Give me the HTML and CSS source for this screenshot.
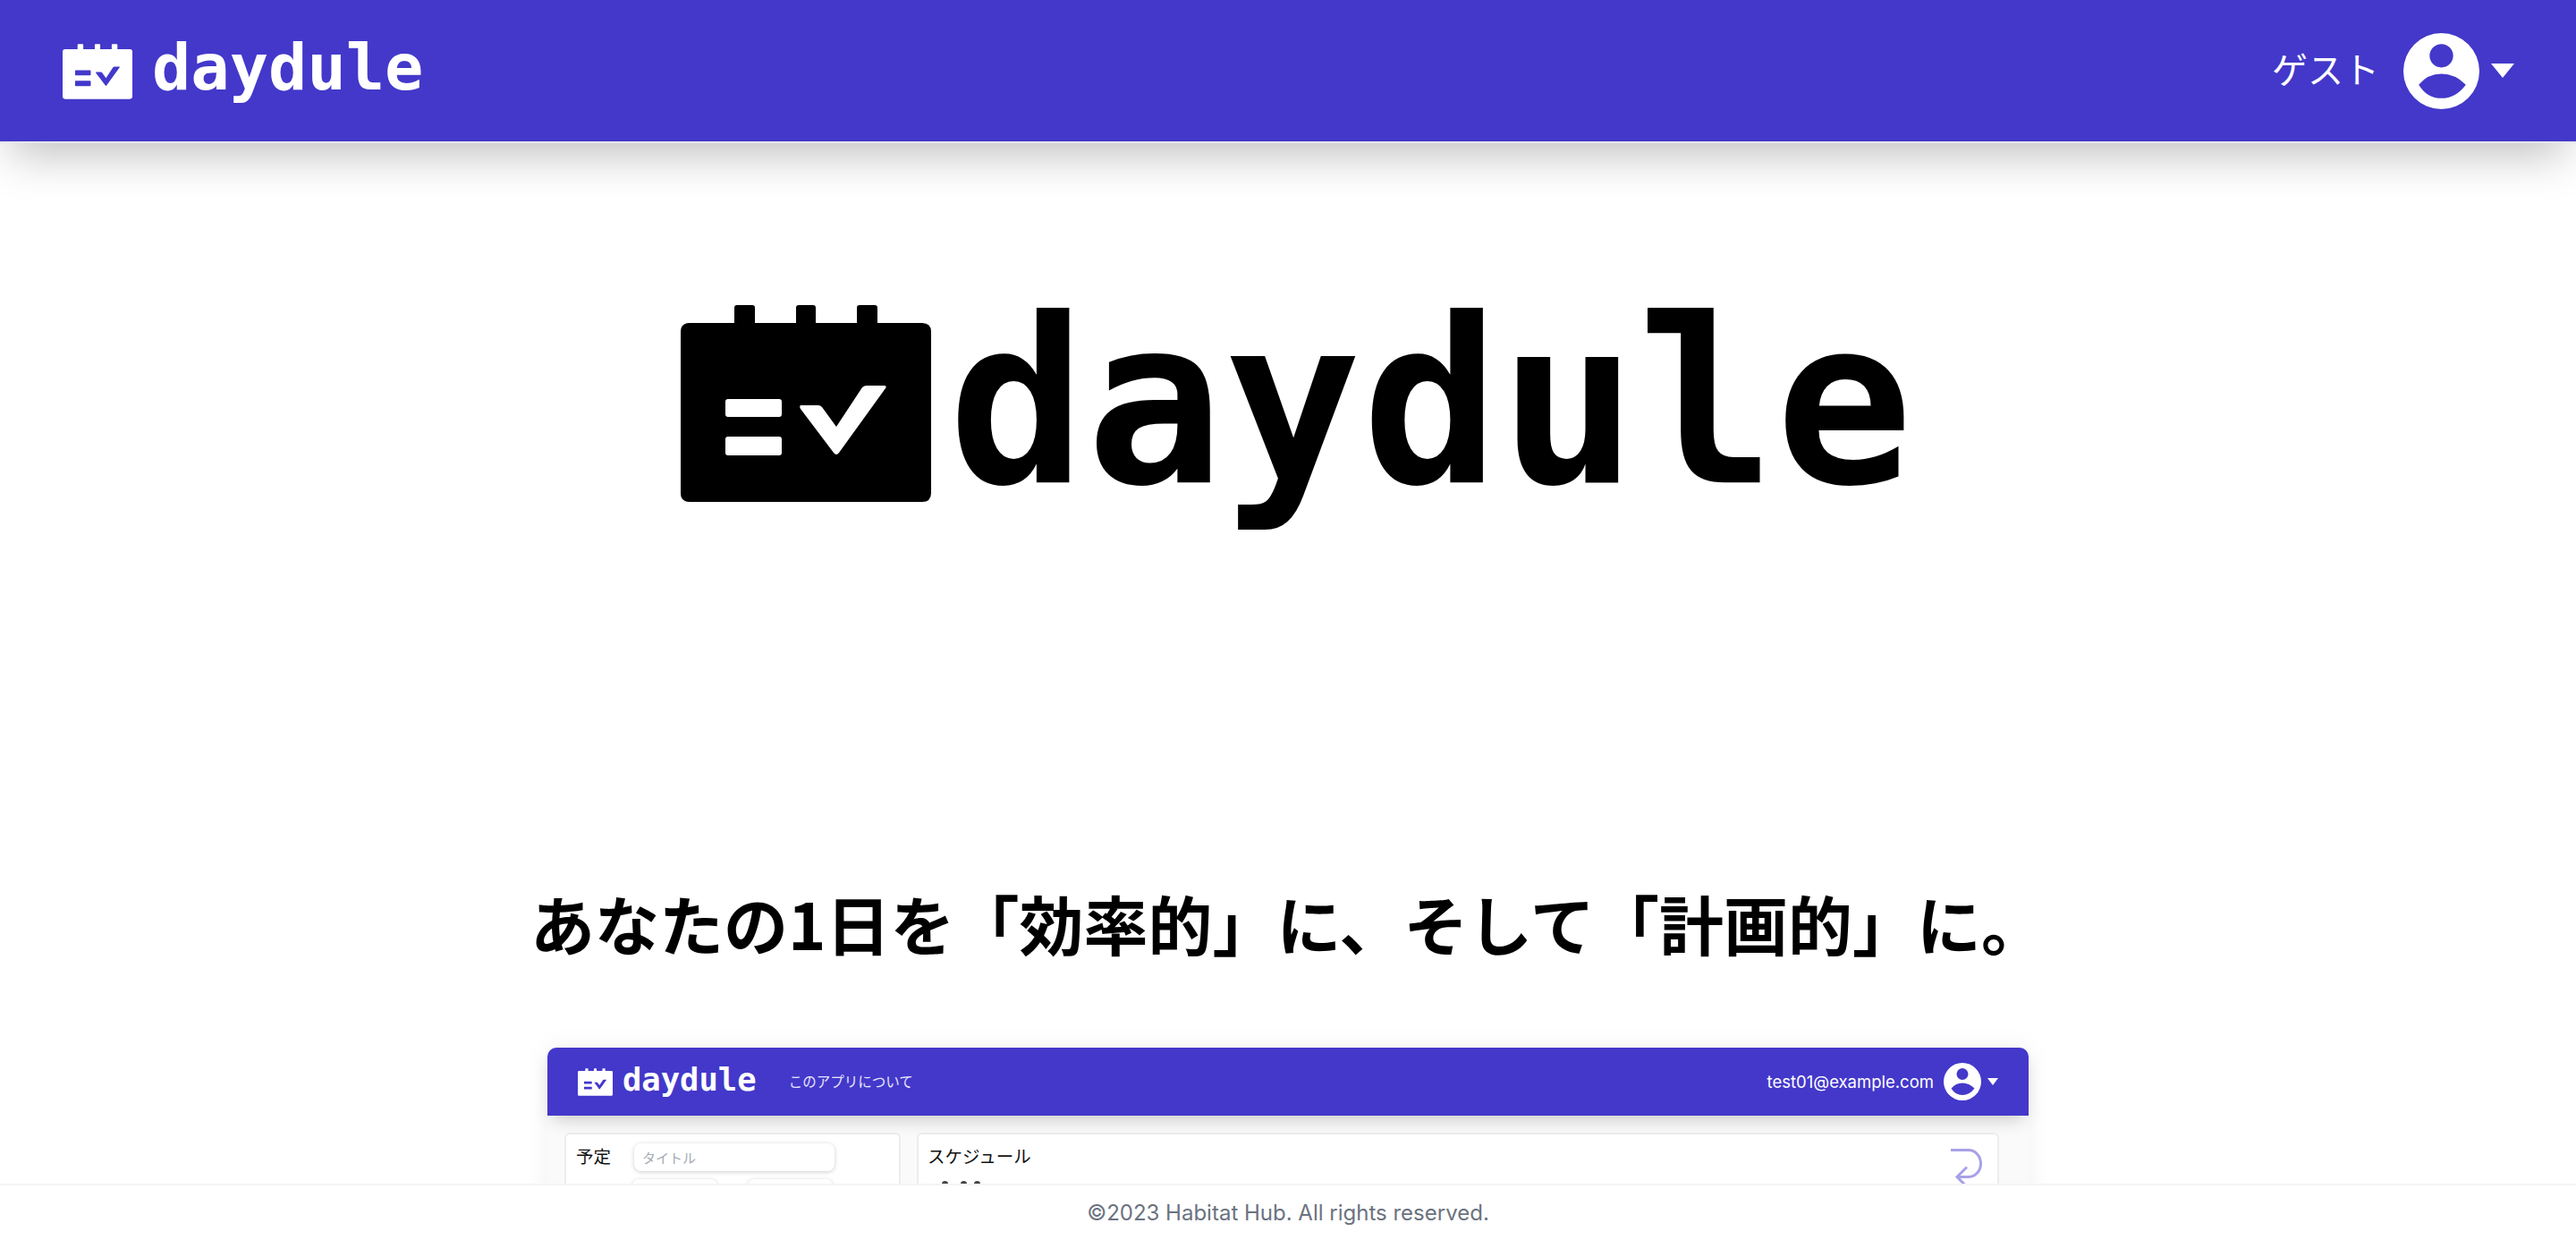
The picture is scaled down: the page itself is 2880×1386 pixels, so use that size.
FILE: index.html
```html
<!DOCTYPE html>
<html lang="ja">
<head>
    <meta charset="UTF-8">
    <meta name="viewport" content="width=device-width, initial-scale=1.0">
    <title>daydule</title>
    <link rel="stylesheet" href="styles.css">
</head>
<body>
    <svg class="defs" width="0" height="0" aria-hidden="true">
        <symbol id="logo-icon" viewBox="0 0 280 220">
            <path fill-rule="evenodd" d="M60 20V3q0-3 3-3h17q3 0 3 3v17h46V3q0-3 3-3h16q3 0 3 3v17h46V3q0-3 3-3h17q3 0 3 3v17h50q10 0 10 10v180q0 10-10 10H10q-10 0-10-10V30q0-10 10-10zM50 108v14q0 3 3 3h57q3 0 3-3v-14q0-3-3-3H53q-3 0-3 3zm0 42v15q0 3 3 3h57q3 0 3-3v-15q0-3-3-3H53q-3 0-3 3zm84-34 37 49q3 4 6 0l52-72q2-3-2-3h-19q-3 0-5 2l-29 44-16-22q-2-2-4-2h-19q-3 0-1 4z"/>
        </symbol>
        <symbol id="avatar-icon" viewBox="0 0 84 84">
            <path fill-rule="evenodd" d="M42 0a42 42 0 1 0 0 84 42 42 0 0 0 0-84zm0 12a13 13 0 1 1 0 26 13 13 0 0 1 0-26zM17 57q10-12 25-12t27 12q-11 15-27 15T17 57z"/>
        </symbol>
    </svg>

    <header class="navbar">
        <a class="brand" href="#">
            <svg class="brand-icon"><use href="#logo-icon"/></svg>
            <span class="brand-name">daydule</span>
        </a>
        <div class="user-menu">
            <span class="user-name">ゲスト</span>
            <svg class="avatar"><use href="#avatar-icon"/></svg>
            <span class="caret"></span>
        </div>
    </header>

    <main class="hero">
        <div class="hero-logo">
            <svg class="hero-icon"><use href="#logo-icon"/></svg>
            <span class="hero-name">daydule</span>
        </div>
        <h1 class="catch">あなたの1日を「効率的」に、そして「計画的」に。</h1>

        <div class="shot">
            <div class="shot-nav">
                <svg class="shot-icon"><use href="#logo-icon"/></svg>
                <span class="shot-name">daydule</span>
                <span class="shot-link">このアプリについて</span>
                <span class="shot-email">test01@example.com</span>
                <svg class="shot-avatar"><use href="#avatar-icon"/></svg>
                <span class="shot-caret"></span>
            </div>
            <div class="shot-body">
                <section class="panel panel-form">
                    <div class="form-row">
                        <span class="panel-title">予定</span>
                        <div class="fake-input">タイトル</div>
                    </div>
                    <div class="form-row form-row-times">
                        <div class="fake-input"></div>
                        <div class="fake-input"></div>
                    </div>
                </section>
                <section class="panel panel-schedule">
                    <div class="schedule-head">
                        <span class="panel-title">スケジュール</span>
                        <svg class="undo" viewBox="0 0 36 48"><path d="M1 1.5h20a13.5 15 0 0 1 0 30H8m11-11L8 31.5l11 11"/></svg>
                    </div>
                    <div class="schedule-dots">
                        <span></span><span></span><span></span>
                    </div>
                </section>
            </div>
        </div>
    </main>

    <footer class="footer">©2023 Habitat Hub. All rights reserved.</footer>
</body>
</html>
```

FILE: styles.css
```css
* {
    box-sizing: border-box;
}
html, body {
    height: 100%;
}
body {
    margin: 0;
    display: flex;
    flex-direction: column;
    overflow: hidden;
    background: #fff;
    font-family: Inter, "Noto Sans CJK JP", sans-serif;
    color: #000;
}
.defs {
    display: none;
}

/* navbar */
.navbar {
    flex: none;
    height: 160px;
    padding: 0 69px 0 70px;
    display: flex;
    align-items: center;
    justify-content: space-between;
    background: #4338ca;
    border-bottom: 2px solid #e5e7eb;
    box-shadow: 0 25px 50px -12px rgba(0, 0, 0, 0.25);
    position: relative;
    z-index: 1;
}
.brand {
    display: flex;
    align-items: center;
    gap: 22px;
    color: #fff;
    text-decoration: none;
}
.brand-icon {
    width: 78px;
    height: 62px;
    margin-top: 2px;
    fill: #fff;
}
.brand-name {
    font: bold 72px/1 "DejaVu Sans Mono", monospace;
    margin-top: -8px;
}
.user-menu {
    display: flex;
    align-items: center;
    color: #fff;
}
.user-name {
    font: 40px/1 "Noto Sans CJK JP", sans-serif;
    margin: -6px 27px 0 0;
}
.avatar {
    width: 85px;
    height: 85px;
    fill: #fff;
}
.caret {
    margin-left: 13px;
    border-top: 16px solid #fff;
    border-left: 13px solid transparent;
    border-right: 13px solid transparent;
}

/* hero */
.hero {
    flex: 1;
    min-height: 0;
    overflow: hidden;
    display: flex;
    flex-direction: column;
    align-items: center;
}
.hero-logo {
    display: flex;
    align-items: flex-start;
    gap: 19px;
    margin: 181px 0 0 20px;
    height: 220px;
}
.hero-icon {
    flex: none;
    width: 280px;
    height: 220px;
}
.hero-name {
    font: bold 256px/1 "DejaVu Sans Mono", monospace;
    margin-top: -19px;
}
.catch {
    margin: 425px 0 0;
    font: bold 72px/1.25 "Noto Sans CJK JP", sans-serif;
}

/* app screenshot */
.shot {
    flex: none;
    width: 1656px;
    margin-top: 95px;
    background: #fafafa;
    border-radius: 10px 10px 0 0;
    box-shadow: 0 0 30px rgba(0, 0, 0, 0.06);
}
.shot-nav {
    height: 76px;
    padding: 0 34px;
    display: flex;
    align-items: center;
    background: #4338ca;
    border-radius: 10px 10px 0 0;
    box-shadow: 0 10px 20px -6px rgba(0, 0, 0, 0.2);
    color: #fff;
    position: relative;
}
.shot-icon {
    width: 39px;
    height: 31px;
    fill: #fff;
}
.shot-name {
    font: bold 35.5px/1 "DejaVu Sans Mono", monospace;
    margin: -4px 0 0 11px;
}
.shot-link {
    font: 15.5px/1 "Noto Sans CJK JP", sans-serif;
    margin-left: 36px;
    color: #e8e6fa;
}
.shot-email {
    font-size: 18.5px;
    margin-left: auto;
}
.shot-avatar {
    width: 42px;
    height: 42px;
    margin-left: 11px;
    fill: #fff;
}
.shot-caret {
    margin-left: 7px;
    border-top: 8px solid #fff;
    border-left: 6px solid transparent;
    border-right: 6px solid transparent;
}
.shot-body {
    height: 200px;
    padding: 19px 33px 0 19px;
    display: flex;
    gap: 18px;
}
.panel {
    height: 200px;
    background: #fff;
    border: 2px solid #ededed;
    border-radius: 6px;
}
.panel-form {
    flex: none;
    width: 376px;
    padding: 10px 12px 10px 11px;
}
.panel-schedule {
    flex: 1;
    padding: 16px 17px 0 10px;
}
.panel-title {
    font: 19.5px/1 "Noto Sans CJK JP", sans-serif;
    color: #111;
    margin-bottom: 3px;
}
.panel-schedule .panel-title {
    margin-top: -2px;
}
.form-row {
    display: flex;
    align-items: center;
    gap: 26px;
}
.form-row-times {
    margin: 9px 0 0 63px;
    gap: 34px;
}
.fake-input {
    flex: none;
    width: 224px;
    height: 31px;
    padding: 0 9px;
    background: #fff;
    border-radius: 8px;
    box-shadow: 0 1px 5px rgba(0, 0, 0, 0.2);
    font: 15px/31px "Noto Sans CJK JP", sans-serif;
    color: #a3a9b3;
}
.form-row-times .fake-input {
    width: 95px;
}
.schedule-head {
    display: flex;
    justify-content: space-between;
    align-items: flex-start;
}
.undo {
    flex: none;
    width: 36px;
    height: 48px;
    fill: none;
    stroke: #a7a1e8;
    stroke-width: 3;
}
/* tops of the next row, the footer covers the rest */
.schedule-dots {
    display: flex;
    gap: 14px;
    margin: -12px 0 0 16px;
}
.schedule-dots span {
    width: 7px;
    height: 7px;
    border-radius: 50%;
    background: #444;
}
.schedule-dots span:last-child {
    margin-left: -6px;
}

/* footer */
.footer {
    flex: none;
    height: 63px;
    padding-top: 15px;
    position: relative;
    z-index: 1;
    background: #fff;
    border-top: 2px solid #f3f4f6;
    text-align: center;
    font-size: 24px;
    line-height: 32px;
    color: #6b7280;
}
```
